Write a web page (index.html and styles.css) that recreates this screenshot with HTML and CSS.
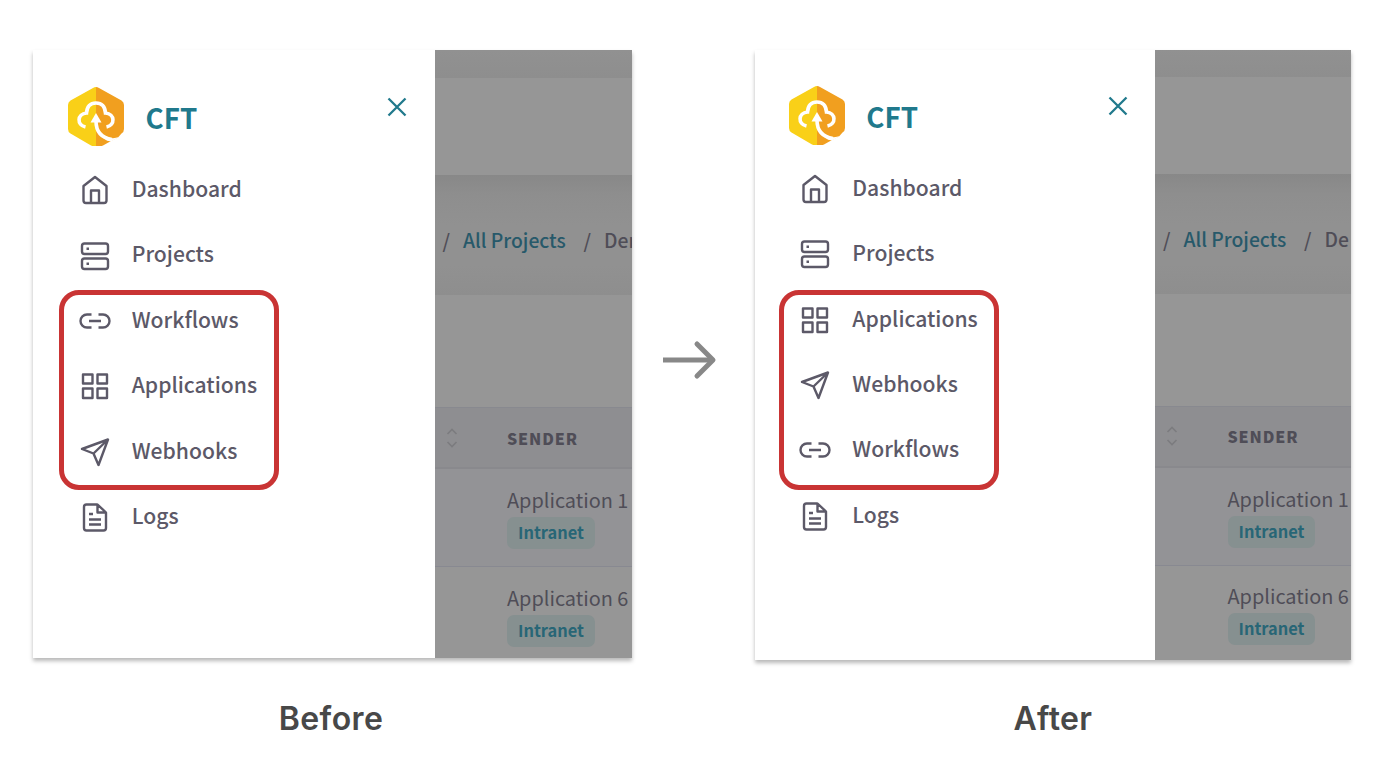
FILE: index.html
```html
<!DOCTYPE html>
<html lang="en">
<head>
<meta charset="utf-8">
<title>Menu order: before and after</title>
<link rel="stylesheet" href="styles.css">
</head>
<body>
<svg class="defs" width="0" height="0">
  <symbol id="logo" viewBox="0 0 56 60">
    <path d="M28 0Q26.500 0 25 1L2.500 13.500Q0 15 0 18V42Q0 45 2.500 46.500L23 58.500Q24 59 26 59H28Z" fill="#f9d018"/>
    <path d="M28 0Q29.500 0 31 1L53.500 13.500Q56 15 56 18V42Q56 45 53.500 46.500L50 50.500Q46 52 43 54L35 58.500Q34 59 32 59H28Z" fill="#f19f1f"/>
    <path d="M17.500 40C8.500 38 9 27 18.500 26C19 19.500 22 16 28 16C34 16 37 19.500 37.500 26C47 27 47.500 38 38.500 40" fill="none" stroke="#fff" stroke-width="3.600"/>
    <path d="M28 26L33.500 35.500H22.500Z" fill="#fff"/>
    <path d="M28 34C28 45 34 51 44 52.500" fill="none" stroke="#fff" stroke-width="3.600"/>
    <path d="M38 49.500Q44 52.500 51 50L43 54.500Q38 54 36 51Z" fill="#fff"/>
  </symbol>
  <symbol id="home" viewBox="0 0 32 32"><path d="M4.500 12L16 3L27.500 12V26.500Q27.500 29 25 29H7Q4.500 29 4.500 26.500ZM12 29V16.500H20V29"/></symbol>
  <symbol id="server" viewBox="0 0 32 32"><rect x="3" y="3.500" width="26" height="10.500" rx="2.500"/><rect x="3" y="18.500" width="26" height="10.500" rx="2.500"/><path d="M7.500 8.700H10M7.500 23.700H10"/></symbol>
  <symbol id="link" viewBox="0 0 32 32"><path d="M12.500 9.500H8A6.500 6.500 0 0 0 8 22.500H12.500M19.500 9.500H24A6.500 6.500 0 0 1 24 22.500H19.500M10 16H22"/></symbol>
  <symbol id="grid" viewBox="0 0 32 32"><path d="M4 4.500H13.500V13.500H4ZM18.500 4.500H28V13.500H18.500ZM4 18.500H13.500V28H4ZM18.500 18.500H28V28H18.500Z"/></symbol>
  <symbol id="send" viewBox="0 0 32 32"><path d="M29 3.500L3 13L14.500 17.500L19.500 29ZM29 3.500L14.500 17.500"/></symbol>
  <symbol id="doc" viewBox="0 0 32 32"><path d="M18.500 3.500H7.500Q5 3.500 5 6V27Q5 29.500 7.500 29.500H24.500Q27 29.500 27 27V11.500L18.500 3.500V11.500H27M10 13H14M10 18.500H22M10 23.500H22"/></symbol>
</svg>
<main class="compare">
  <figure class="side before">
    <div class="shot">
      <div class="drawer">
        <header class="brand">
          <svg class="logo"><use href="#logo"/></svg>
          <span class="name">CFT</span>
          <svg class="close" viewBox="0 0 20 20"><path d="M1.500 1.500L18.500 18.500M18.500 1.500L1.500 18.500"/></svg>
        </header>
        <nav class="menu">
          <a class="item"><svg class="icon"><use href="#home"/></svg><span>Dashboard</span></a>
          <a class="item"><svg class="icon"><use href="#server"/></svg><span>Projects</span></a>
          <a class="item"><svg class="icon"><use href="#link"/></svg><span>Workflows</span></a>
          <a class="item"><svg class="icon"><use href="#grid"/></svg><span>Applications</span></a>
          <a class="item"><svg class="icon"><use href="#send"/></svg><span>Webhooks</span></a>
          <a class="item"><svg class="icon"><use href="#doc"/></svg><span>Logs</span></a>
        </nav>
      </div>
      <div class="page">
        <div class="strip"></div>
        <div class="topbar"></div>
        <div class="crumbs"><i>/</i><b>All Projects</b><i>/</i><span>Dem</span></div>
        <div class="tools"></div>
        <div class="thead"><svg class="sort" viewBox="0 0 12 20"><path d="M1.500 6L6 1.500L10.500 6M1.500 14L6 18.500L10.500 14"/></svg><span>SENDER</span></div>
        <div class="row alt"><span>Application 1</span><em>Intranet</em></div>
        <div class="row"><span>Application 6</span><em>Intranet</em></div>
      </div>
    </div>
    <div class="highlight"></div>
    <figcaption>Before</figcaption>
  </figure>
  <svg class="arrow" viewBox="0 0 54 40"><path d="M34 4L50 20L34 36"/><path d="M0 20H50" stroke-linecap="butt"/></svg>
  <figure class="side after">
    <div class="shot">
      <div class="drawer">
        <header class="brand">
          <svg class="logo"><use href="#logo"/></svg>
          <span class="name">CFT</span>
          <svg class="close" viewBox="0 0 20 20"><path d="M1.500 1.500L18.500 18.500M18.500 1.500L1.500 18.500"/></svg>
        </header>
        <nav class="menu">
          <a class="item"><svg class="icon"><use href="#home"/></svg><span>Dashboard</span></a>
          <a class="item"><svg class="icon"><use href="#server"/></svg><span>Projects</span></a>
          <a class="item"><svg class="icon"><use href="#grid"/></svg><span>Applications</span></a>
          <a class="item"><svg class="icon"><use href="#send"/></svg><span>Webhooks</span></a>
          <a class="item"><svg class="icon"><use href="#link"/></svg><span>Workflows</span></a>
          <a class="item"><svg class="icon"><use href="#doc"/></svg><span>Logs</span></a>
        </nav>
      </div>
      <div class="page">
        <div class="strip"></div>
        <div class="topbar"></div>
        <div class="crumbs"><i>/</i><b>All Projects</b><i>/</i><span>De</span></div>
        <div class="tools"></div>
        <div class="thead"><svg class="sort" viewBox="0 0 12 20"><path d="M1.500 6L6 1.500L10.500 6M1.500 14L6 18.500L10.500 14"/></svg><span>SENDER</span></div>
        <div class="row alt"><span>Application 1</span><em>Intranet</em></div>
        <div class="row"><span>Application 6</span><em>Intranet</em></div>
      </div>
    </div>
    <div class="highlight"></div>
    <figcaption>After</figcaption>
  </figure>
</main>
</body>
</html>
```

FILE: styles.css
```css
* { box-sizing: border-box; }
body { margin: 0; background: #fff; font-family: "Noto Sans CJK SC", "Open Sans", sans-serif; overflow: hidden; }
.defs { position: absolute; }
.compare { display: flex; width: 1382px; height: 770px; padding: 50px 31px 0 33px; }
.side { position: relative; margin: 0; width: 599px; flex: none; }
.after { width: 596px; margin-left: 38px; }
.shot { display: flex; height: 608px; overflow: hidden; background: #fff; box-shadow: 0 3px 4px rgba(0,0,0,.28); }
.after .shot { height: 610px; }
.drawer { width: 401.500px; flex: none; background: #fff; }
.after .drawer { width: 400px; }
.brand { display: flex; height: 106px; padding: 37px 0 0 35.300px; align-items: flex-start; }
.after .brand { height: 104.700px; padding: 35.500px 0 0 34px; }
.logo { width: 56px; height: 60px; }
.name { width: 241.500px; margin-left: 21.300px; padding-top: 7px; font-size: 27.700px; line-height: 46px; font-weight: 700; color: #20798c; }
.close { width: 20px; height: 20px; margin-top: 10px; flex: none; fill: none; stroke: #20798c; stroke-width: 2.300; }
.item { display: flex; align-items: center; height: 65.400px; padding-left: 45.700px; color: #5c5968; font-size: 21.150px; line-height: 32px; font-weight: 500; white-space: nowrap; }
.after .item { padding-left: 44.300px; }
.item span { margin-top: -1.200px; }
.icon { width: 32px; height: 32px; margin: 3px 21px 0 0; flex: none; fill: none; stroke: #5c5968; stroke-width: 2.400; stroke-linejoin: round; }
.page { flex: 1; min-width: 0; background: #969696; overflow: hidden; color: #4f4d57; }
.after .page { margin-top: -1.300px; }
.strip { height: 28px; background: linear-gradient(#919191, #8e8e8e); }
.topbar { height: 97px; background: #969696; }
.crumbs { display: flex; align-items: center; height: 120px; padding: 10px 0 0 8px; background: linear-gradient(#888 0, #8e8e8e 20px, #919191 50px, #919191 90px, #8e8e8e); font-size: 19.300px; line-height: 30px; font-weight: 500; white-space: nowrap; }
.crumbs i { font-style: normal; width: 20.500px; flex: none; }
.crumbs b { width: 120.500px; flex: none; font-weight: 500; color: #27596a; }
.tools { height: 112px; }
.thead { display: flex; align-items: center; height: 62px; padding-left: 11px; background: #8e8e91; border-top: 1px solid #88898f; border-bottom: 2px solid #89898d; font-size: 16px; font-weight: 900; letter-spacing: .9px; }
.sort { width: 12px; height: 20px; margin-right: 49.500px; fill: none; stroke: #7c7c7f; stroke-width: 1.600; }
.row { display: flex; flex-direction: column; align-items: flex-start; height: 97px; padding: 14.500px 0 0 72.500px; font-size: 19.900px; line-height: 32px; white-space: nowrap; }
.alt { height: 98px; padding-top: 15.300px; background: #939396; border-bottom: 1px solid #888991; }
.row em { height: 32px; margin-top: 1px; padding: 0 11px; border-radius: 7px; background: #869090; color: #286676; font-size: 16.400px; line-height: 30px; font-style: normal; font-weight: 700; }
.highlight { position: absolute; left: 26px; top: 240px; width: 220px; height: 200px; border: 5px solid #c93434; border-radius: 20px; }
.after .highlight { left: 24px; }
.arrow { width: 54px; height: 40px; margin: 290px 0 0 31px; flex: none; fill: none; stroke: #888; stroke-width: 5; stroke-linecap: round; stroke-linejoin: round; }
figcaption { margin-top: 42px; text-align: center; font-family: Inter, sans-serif; font-size: 32px; line-height: 38px; font-weight: 600; letter-spacing: .4px; color: #484848; }
.before figcaption { padding-right: 3px; }
.after figcaption { margin-top: 40px; }
```
